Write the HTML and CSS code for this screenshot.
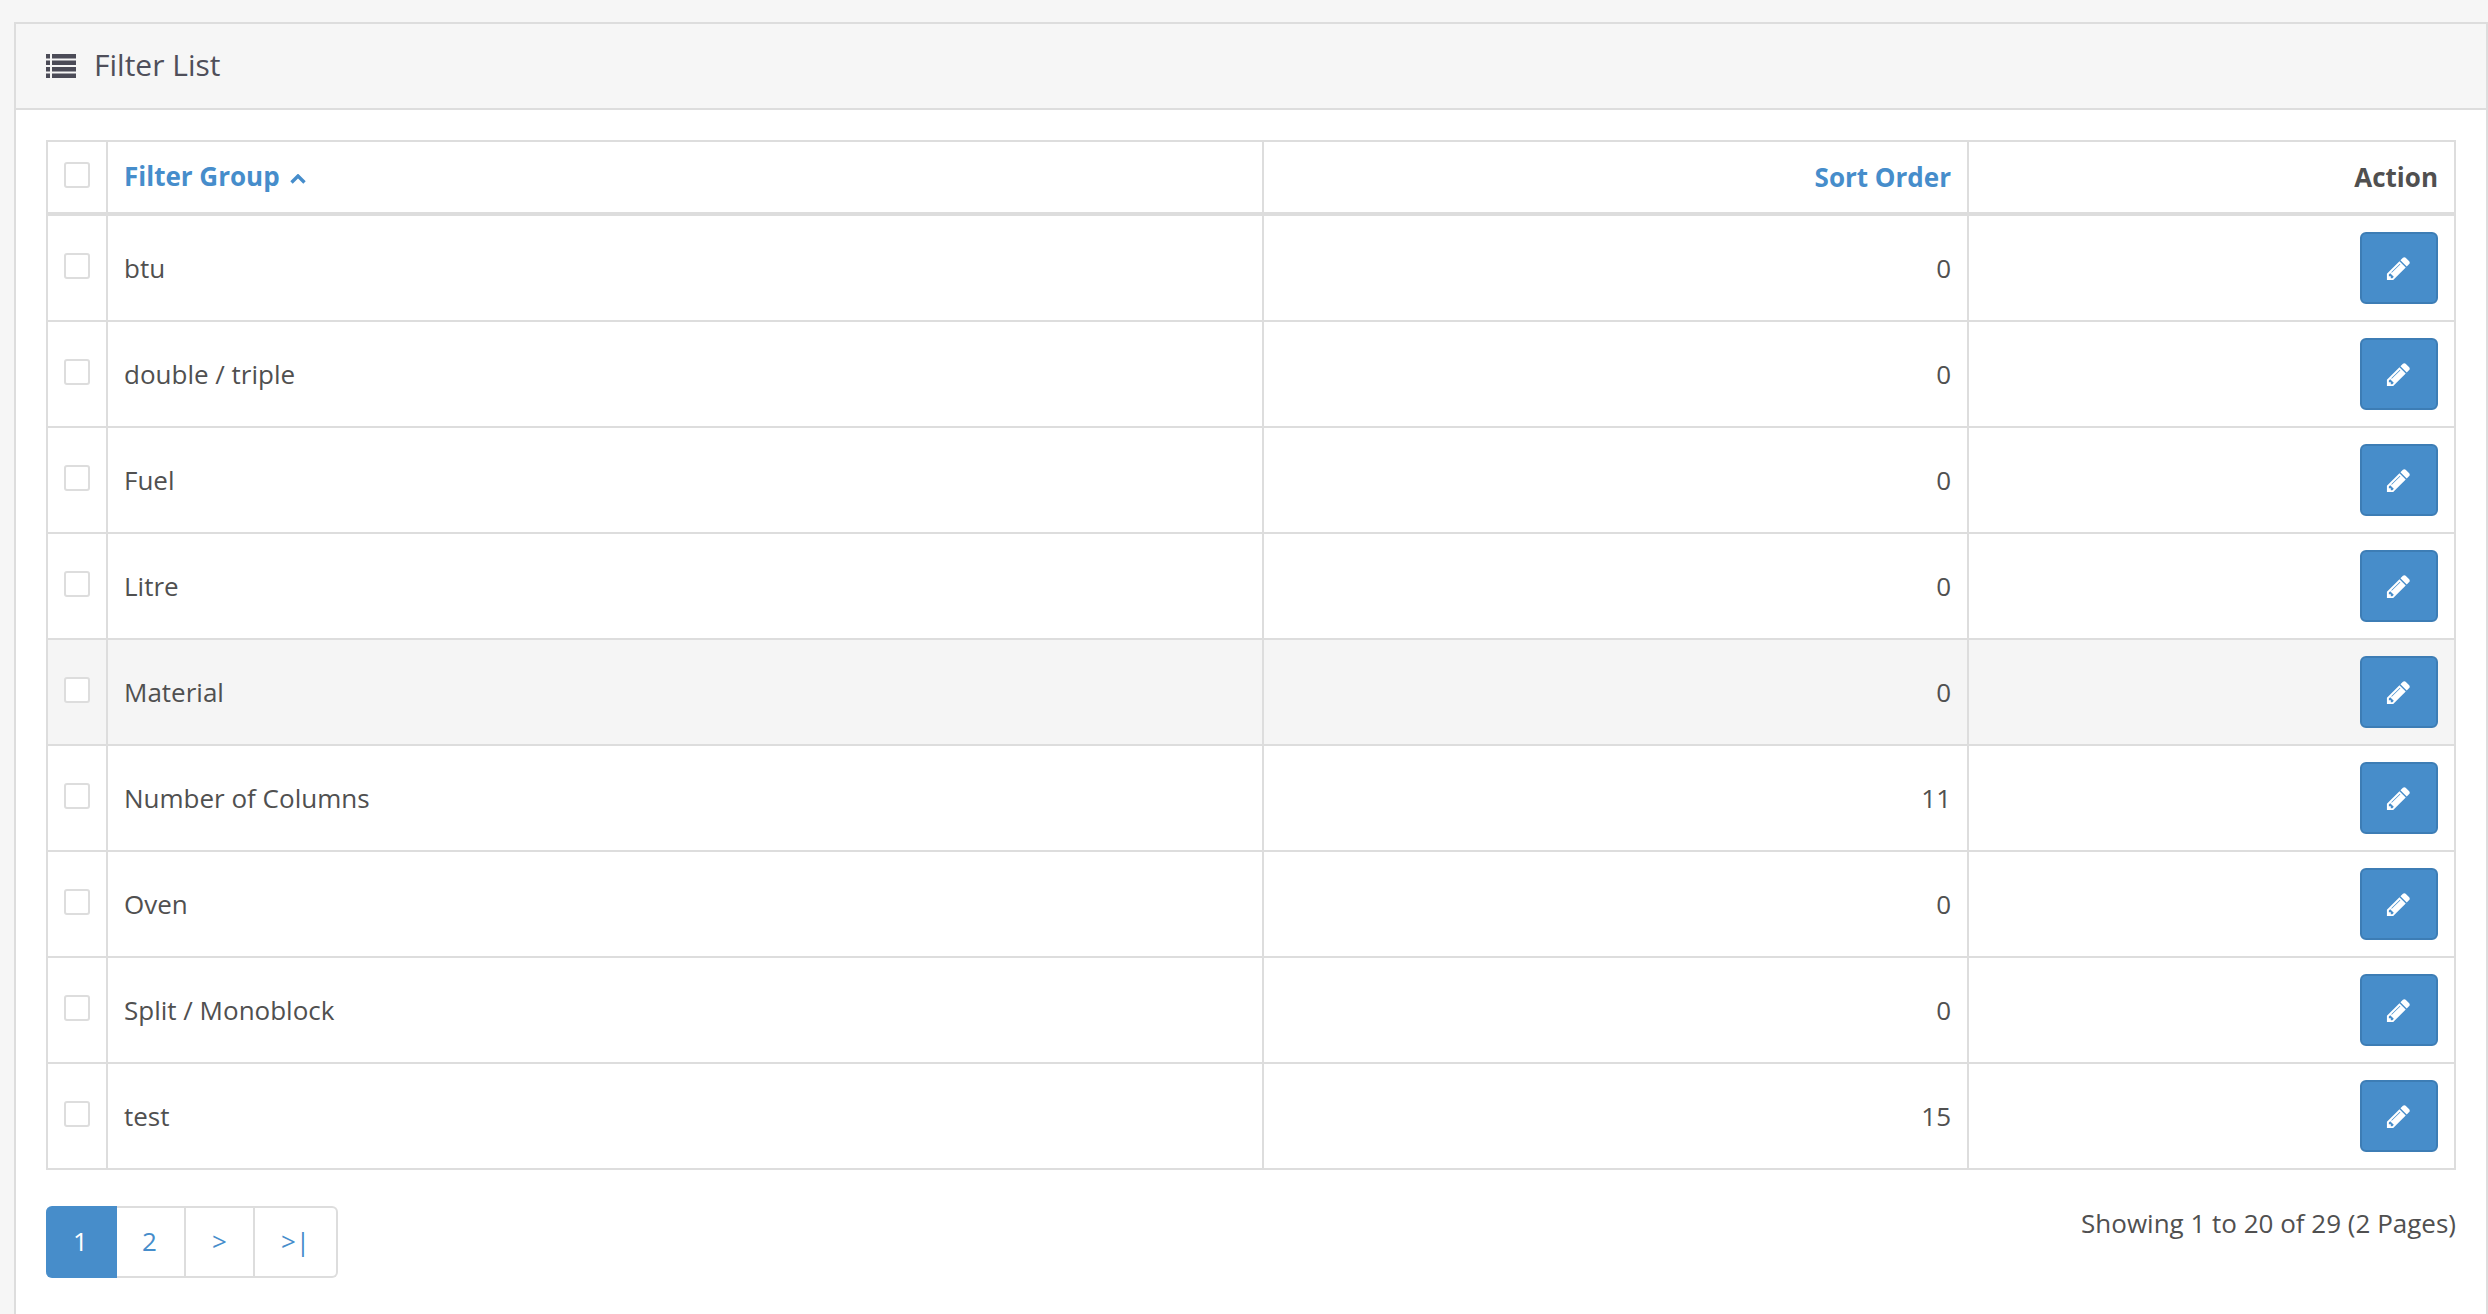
FILE: index.html
```html
<!DOCTYPE html>
<html lang="en">
<head>
<meta charset="utf-8">
<title>Filter List</title>
<link rel="stylesheet" href="styles.css">
</head>
<body>
<svg class="sprite" width="0" height="0" aria-hidden="true">
  <symbol id="pencil" viewBox="0 0 1792 1792"><path d="M491 1536l91-91-235-235-91 91v107h128v128h107zm523-928q0-22-22-22-10 0-17 7l-542 542q-7 7-7 17 0 22 22 22 10 0 17-7l542-542q7-7 7-17zm-54-192l416 416-832 832h-416v-416zm683 96q0 53-37 90l-166 166-416-416 166-165q36-38 90-38 53 0 91 38l235 234q37 39 37 91z"/></symbol>
</svg>
<section class="panel">
  <header class="panel-heading">
    <svg class="list-icon" viewBox="0 0 30 24"><path d="M0 0h4v4.500H0zM6 0h24v4.500H6zM0 6.500h4V11H0zM6 6.500h24V11H6zM0 13h4v4.500H0zM6 13h24v4.500H6zM0 19.500h4V24H0zM6 19.500h24V24H6z"/></svg>
    <h1 class="panel-title">Filter List</h1>
  </header>
  <div class="panel-body">
    <table class="grid">
      <colgroup><col class="c-check"><col class="c-name"><col class="c-sort"><col class="c-action"></colgroup>
      <thead>
        <tr>
          <th class="check"><span class="box"></span></th>
          <th class="left"><a class="link" href="#">Filter Group<svg class="caret" viewBox="0 0 16 10"><path d="M1.500 8.500 8 2l6.500 6.500"/></svg></a></th>
          <th class="right"><a class="link" href="#">Sort Order</a></th>
          <th class="right">Action</th>
        </tr>
      </thead>
      <tbody>
        <tr><td class="check"><span class="box"></span></td><td class="left">btu</td><td class="right">0</td><td class="right action"><a class="btn" href="#"><svg class="pencil"><use href="#pencil"/></svg></a></td></tr>
        <tr><td class="check"><span class="box"></span></td><td class="left">double / triple</td><td class="right">0</td><td class="right action"><a class="btn" href="#"><svg class="pencil"><use href="#pencil"/></svg></a></td></tr>
        <tr><td class="check"><span class="box"></span></td><td class="left">Fuel</td><td class="right">0</td><td class="right action"><a class="btn" href="#"><svg class="pencil"><use href="#pencil"/></svg></a></td></tr>
        <tr><td class="check"><span class="box"></span></td><td class="left">Litre</td><td class="right">0</td><td class="right action"><a class="btn" href="#"><svg class="pencil"><use href="#pencil"/></svg></a></td></tr>
        <tr class="hover"><td class="check"><span class="box"></span></td><td class="left">Material</td><td class="right">0</td><td class="right action"><a class="btn" href="#"><svg class="pencil"><use href="#pencil"/></svg></a></td></tr>
        <tr><td class="check"><span class="box"></span></td><td class="left">Number of Columns</td><td class="right">11</td><td class="right action"><a class="btn" href="#"><svg class="pencil"><use href="#pencil"/></svg></a></td></tr>
        <tr><td class="check"><span class="box"></span></td><td class="left">Oven</td><td class="right">0</td><td class="right action"><a class="btn" href="#"><svg class="pencil"><use href="#pencil"/></svg></a></td></tr>
        <tr><td class="check"><span class="box"></span></td><td class="left">Split / Monoblock</td><td class="right">0</td><td class="right action"><a class="btn" href="#"><svg class="pencil"><use href="#pencil"/></svg></a></td></tr>
        <tr><td class="check"><span class="box"></span></td><td class="left">test</td><td class="right">15</td><td class="right action"><a class="btn" href="#"><svg class="pencil"><use href="#pencil"/></svg></a></td></tr>
      </tbody>
    </table>
    <div class="footer">
      <nav class="pagination">
        <span class="page page-1 active">1</span>
        <a class="page page-2" href="#">2</a>
        <a class="page page-3" href="#">&gt;</a>
        <a class="page page-4" href="#">&gt;|</a>
      </nav>
      <p class="results">Showing 1 to 20 of 29 (2 Pages)</p>
    </div>
  </div>
</section>
</body>
</html>
```

FILE: styles.css
```css
html, body { height: 100%; overflow: hidden; }
body {
  margin: 0;
  padding: 22px 0 0 14px;
  box-sizing: border-box;
  background: #f6f6f6;
  color: #505050;
  font: 26px/1.42857 "Open Sans", sans-serif;
}
.sprite { position: absolute; }
.panel { border: 2px solid #ddd; background: #fff; min-height: 1400px; }
.panel-heading {
  display: flex;
  align-items: center;
  gap: 18px;
  height: 84px;
  padding: 0 30px;
  background: #f6f6f6;
  border-bottom: 2px solid #ddd;
}
.list-icon { width: 30px; height: 24px; fill: #4b4b57; flex: none; }
.panel-title { margin: 0 0 3px; font-size: 30px; font-weight: 400; color: #4f4f5a; line-height: 1; }
.panel-body { padding: 30px 30px 0; }
.grid {
  width: 2410px;
  table-layout: fixed;
  border-collapse: separate;
  border-spacing: 0;
  border-top: 2px solid #ddd;
  border-left: 2px solid #ddd;
}
.c-check { width: 60px; }
.c-name { width: 1156px; }
.c-sort { width: 705px; }
.c-action { width: 487px; }
.grid th, .grid td {
  padding: 2px 16px 0;
  border-right: 2px solid #ddd;
  border-bottom: 2px solid #ddd;
  vertical-align: middle;
}
.grid th { height: 74px; box-sizing: border-box; border-bottom-width: 4px; font-weight: 700; color: #505050; }
.grid th.left { padding-top: 0; }
.grid td { height: 106px; box-sizing: border-box; }
.grid .check { padding: 0; text-align: center; }
.grid .action { padding-top: 0; }
.left { text-align: left; }
.right { text-align: right; }
.hover td { background: #f5f5f5; }
.box {
  display: block;
  width: 26px;
  height: 26px;
  box-sizing: border-box;
  margin: -4px auto 0 16px;
  border: 2px solid #ddd;
  border-radius: 3px;
  background: #fff;
}
.link { color: #468dcb; text-decoration: none; }
.caret { width: 16px; height: 10px; margin-left: 10px; position: relative; top: -2px; fill: none; stroke: #468dcb; stroke-width: 3.400; }
.btn {
  display: inline-flex;
  align-items: center;
  justify-content: center;
  vertical-align: middle;
  width: 78px;
  height: 72px;
  padding-right: 2px;
  box-sizing: border-box;
  border: 2px solid #3d7db5;
  border-radius: 6px;
  background: #478dca;
}
.pencil { width: 27px; height: 27px; fill: #fff; }
.footer { display: flex; justify-content: space-between; align-items: flex-start; margin-top: 36px; width: 2410px; }
.pagination { display: flex; }
.page {
  display: flex;
  align-items: center;
  justify-content: center;
  height: 72px;
  box-sizing: border-box;
  color: #468dcb;
  text-decoration: none;
  border: 2px solid #ddd;
  border-left: 0;
}
.page-1 { width: 71px; }
.page-2 { width: 69px; padding-right: 2px; }
.page-3 { width: 69px; }
.page-4 { width: 83px; border-radius: 0 6px 6px 0; }
.page.active { background: #478dca; border-color: #478dca; color: #fff; border-radius: 6px 0 0 6px; }
.results { margin: -1px 0 0; }
```
